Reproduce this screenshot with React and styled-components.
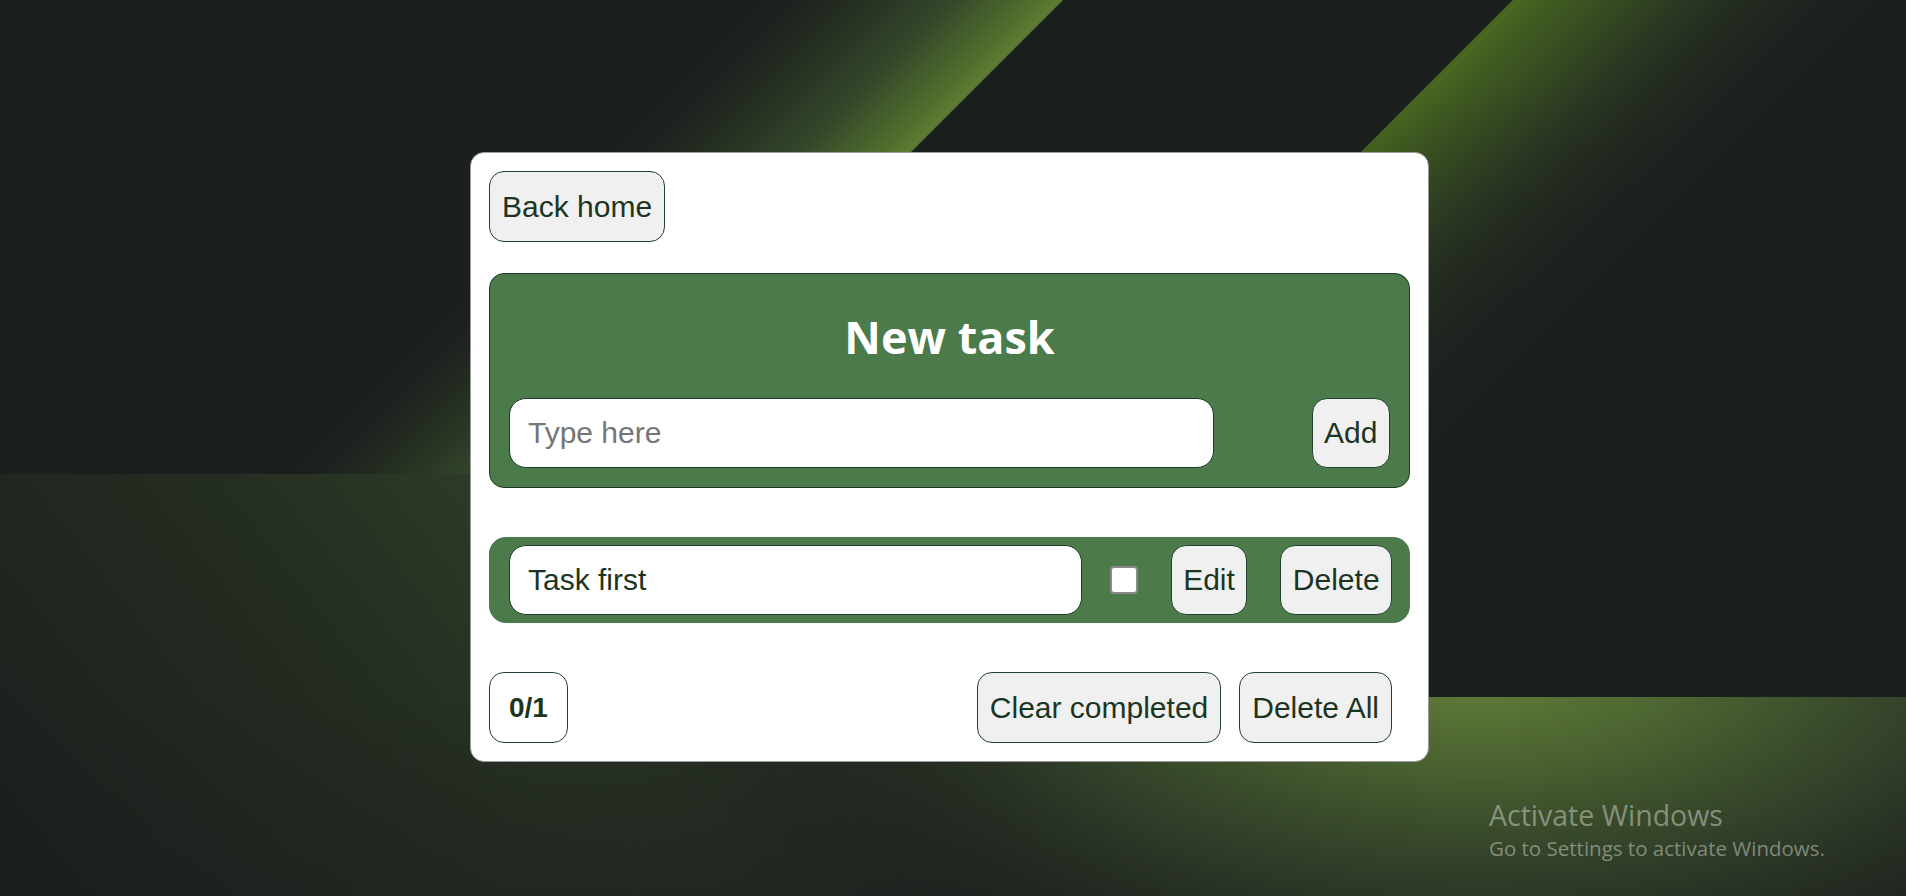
import React from "react";
import styled, { createGlobalStyle } from "styled-components";

const GlobalStyle = createGlobalStyle`
  html, body {
    margin: 0;
    padding: 0;
    background: #1b1f1e;
    overflow: hidden;
  }
  * { box-sizing: border-box; }
`;

const Page = styled.div`
  position: relative;
  min-height: 100vh;
  display: flex;
  justify-content: center;
  align-items: flex-start;
  padding: 152px 7px 0 0;
  font-family: "Liberation Sans", Arial, sans-serif;
`;

const Backdrop = styled.svg`
  position: fixed;
  inset: 0;
  width: 100%;
  height: 100%;
  z-index: 0;
`;

const Card = styled.div`
  position: relative;
  z-index: 1;
  width: 959px;
  background: #ffffff;
  border: 1px solid #9a9a9a;
  border-radius: 14px;
  padding: 18px;
  display: flex;
  flex-direction: column;
`;

const Button = styled.button`
  height: ${(p) => p.$h || 70}px;
  padding: 0 ${(p) => p.$px || 11.5}px;
  background: #f0f0f0;
  border: 1px solid #22402a;
  border-radius: 15px;
  color: #1c3522;
  font-family: "Liberation Sans", Arial, sans-serif;
  font-size: 30px;
  line-height: 1;
  cursor: pointer;
  white-space: nowrap;
  flex: none;
  margin-left: ${(p) => p.$ml || 0}px;
`;

const BackButton = styled(Button)`
  align-self: flex-start;
`;

const Panel = styled.section`
  margin-top: 31px;
  background: #4b7b4b;
  border: 1px solid #1f3a24;
  border-radius: 15px;
  padding: 33px 19px 19px;
  display: flex;
  flex-direction: column;
`;

const Title = styled.h1`
  margin: 0 0 31px;
  text-align: center;
  color: #ffffff;
  font-family: "Open Sans", "Noto Sans", sans-serif;
  font-weight: 700;
  font-size: 45px;
  line-height: 60px;
`;

const EntryRow = styled.div`
  display: flex;
  align-items: center;
  justify-content: space-between;
`;

const TextField = styled.input`
  width: ${(p) => p.$w};
  height: 70px;
  flex: none;
  background: #ffffff;
  border: 1px solid #1f3a24;
  border-radius: 17px;
  padding: 0 18px;
  font-family: "Liberation Sans", Arial, sans-serif;
  font-size: 30px;
  color: #1c3522;
  outline: none;
  &::placeholder {
    color: #767676;
  }
`;

const TaskRow = styled.div`
  margin-top: 49px;
  height: 86px;
  background: #4b7b4b;
  border-radius: 17px;
  padding: 0 20px;
  display: flex;
  align-items: center;
`;

const Check = styled.input.attrs({ type: "checkbox" })`
  appearance: none;
  -webkit-appearance: none;
  width: 28px;
  height: 28px;
  margin: 0 0 0 28px;
  flex: none;
  background: #ffffff;
  border: 2px solid #8a8a8a;
  border-radius: 4px;
`;

const Footer = styled.div`
  margin-top: 49px;
  display: flex;
  align-items: center;
  justify-content: space-between;
`;

const Counter = styled.div`
  height: 71px;
  padding: 0 19px;
  display: flex;
  align-items: center;
  background: #ffffff;
  border: 1px solid #22402a;
  border-radius: 15px;
  color: #1c3522;
  font-weight: 700;
  font-size: 28px;
`;

const Actions = styled.div`
  display: flex;
  gap: 18px;
  margin-right: 18px;
`;

const Watermark = styled.div`
  position: fixed;
  left: 1489px;
  top: 796px;
  z-index: 2;
  color: rgba(200, 205, 195, 0.55);
  font-family: "Open Sans", "Noto Sans", sans-serif;
  pointer-events: none;
`;

const WatermarkTitle = styled.div`
  font-size: 28.5px;
  line-height: 38px;
`;

const WatermarkNote = styled.div`
  font-size: 20.5px;
  line-height: 28px;
`;

function Background() {
  return (
    <Backdrop viewBox="0 0 1906 896" preserveAspectRatio="none">
      <defs>
        <linearGradient id="band1" gradientUnits="userSpaceOnUse" x1="830" y1="233" x2="670" y2="73">
          <stop offset="0" stopColor="#5d7e33" />
          <stop offset="0.07" stopColor="#52722e" />
          <stop offset="0.35" stopColor="#34462a" />
          <stop offset="0.7" stopColor="#222a20" />
          <stop offset="1" stopColor="#1b1f1e" stopOpacity="0" />
        </linearGradient>
        <linearGradient id="band2" gradientUnits="userSpaceOnUse" x1="1400" y1="113" x2="1590" y2="303">
          <stop offset="0" stopColor="#49691f" />
          <stop offset="0.12" stopColor="#3f5a21" />
          <stop offset="0.45" stopColor="#2b3822" />
          <stop offset="1" stopColor="#1d2220" stopOpacity="0" />
        </linearGradient>
        <linearGradient id="band2fade" gradientUnits="userSpaceOnUse" x1="0" y1="80" x2="0" y2="600">
          <stop offset="0" stopColor="#1b1f1e" stopOpacity="0" />
          <stop offset="1" stopColor="#1b1f1e" stopOpacity="0.7" />
        </linearGradient>
        <linearGradient id="lowLeft" gradientUnits="userSpaceOnUse" x1="620" y1="474" x2="80" y2="896">
          <stop offset="0" stopColor="#33422a" />
          <stop offset="0.45" stopColor="#252e22" />
          <stop offset="1" stopColor="#1b201d" />
        </linearGradient>
        <linearGradient id="lowLeftEdge" gradientUnits="userSpaceOnUse" x1="500" y1="0" x2="1000" y2="0">
          <stop offset="0" stopColor="#1b1f1e" stopOpacity="0" />
          <stop offset="1" stopColor="#1b1f1e" stopOpacity="1" />
        </linearGradient>
        <radialGradient id="lowRight" gradientUnits="userSpaceOnUse" cx="1480" cy="690" r="800" gradientTransform="translate(1480 690) scale(1 0.5) translate(-1480 -690)">
          <stop offset="0" stopColor="#5d7a37" />
          <stop offset="0.22" stopColor="#4e6832" />
          <stop offset="0.55" stopColor="#33412a" />
          <stop offset="1" stopColor="#1e241e" stopOpacity="0" />
        </radialGradient>
        <linearGradient id="lowRightFade" gradientUnits="userSpaceOnUse" x1="0" y1="697" x2="0" y2="896">
          <stop offset="0" stopColor="#1b1f1e" stopOpacity="0" />
          <stop offset="1" stopColor="#1b1f1e" stopOpacity="0.35" />
        </linearGradient>
      </defs>
      <rect x="0" y="0" width="1906" height="896" fill="#1b1f1e" />
      <polygon points="0,0 1063,0 589,474 0,474" fill="url(#band1)" />
      <polygon points="1513,0 1906,0 1906,697 816,697" fill="url(#band2)" />
      <polygon points="1513,0 1906,0 1906,697 816,697" fill="url(#band2fade)" />
      <rect x="0" y="474" width="1200" height="422" fill="url(#lowLeft)" />
      <rect x="0" y="474" width="1200" height="422" fill="url(#lowLeftEdge)" />
      <rect x="0" y="697" width="1906" height="199" fill="url(#lowRight)" />
      <rect x="0" y="697" width="1906" height="199" fill="url(#lowRightFade)" />
    </Backdrop>
  );
}

export default function App() {
  return (
    <>
      <GlobalStyle />
      <Page>
        <Background />
        <Card>
          <BackButton $h={71} $px={12}>Back home</BackButton>
          <Panel>
            <Title>New task</Title>
            <EntryRow>
              <TextField $w="80%" placeholder="Type here" />
              <Button>Add</Button>
            </EntryRow>
          </Panel>
          <TaskRow>
            <TextField $w="65%" value="Task first" readOnly />
            <Check />
            <Button $ml={33}>Edit</Button>
            <Button $ml={33}>Delete</Button>
          </TaskRow>
          <Footer>
            <Counter>0/1</Counter>
            <Actions>
              <Button $h={71} $px={12}>Clear completed</Button>
              <Button $h={71} $px={12}>Delete All</Button>
            </Actions>
          </Footer>
        </Card>
        <Watermark>
          <WatermarkTitle>Activate Windows</WatermarkTitle>
          <WatermarkNote>Go to Settings to activate Windows.</WatermarkNote>
        </Watermark>
      </Page>
    </>
  );
}
